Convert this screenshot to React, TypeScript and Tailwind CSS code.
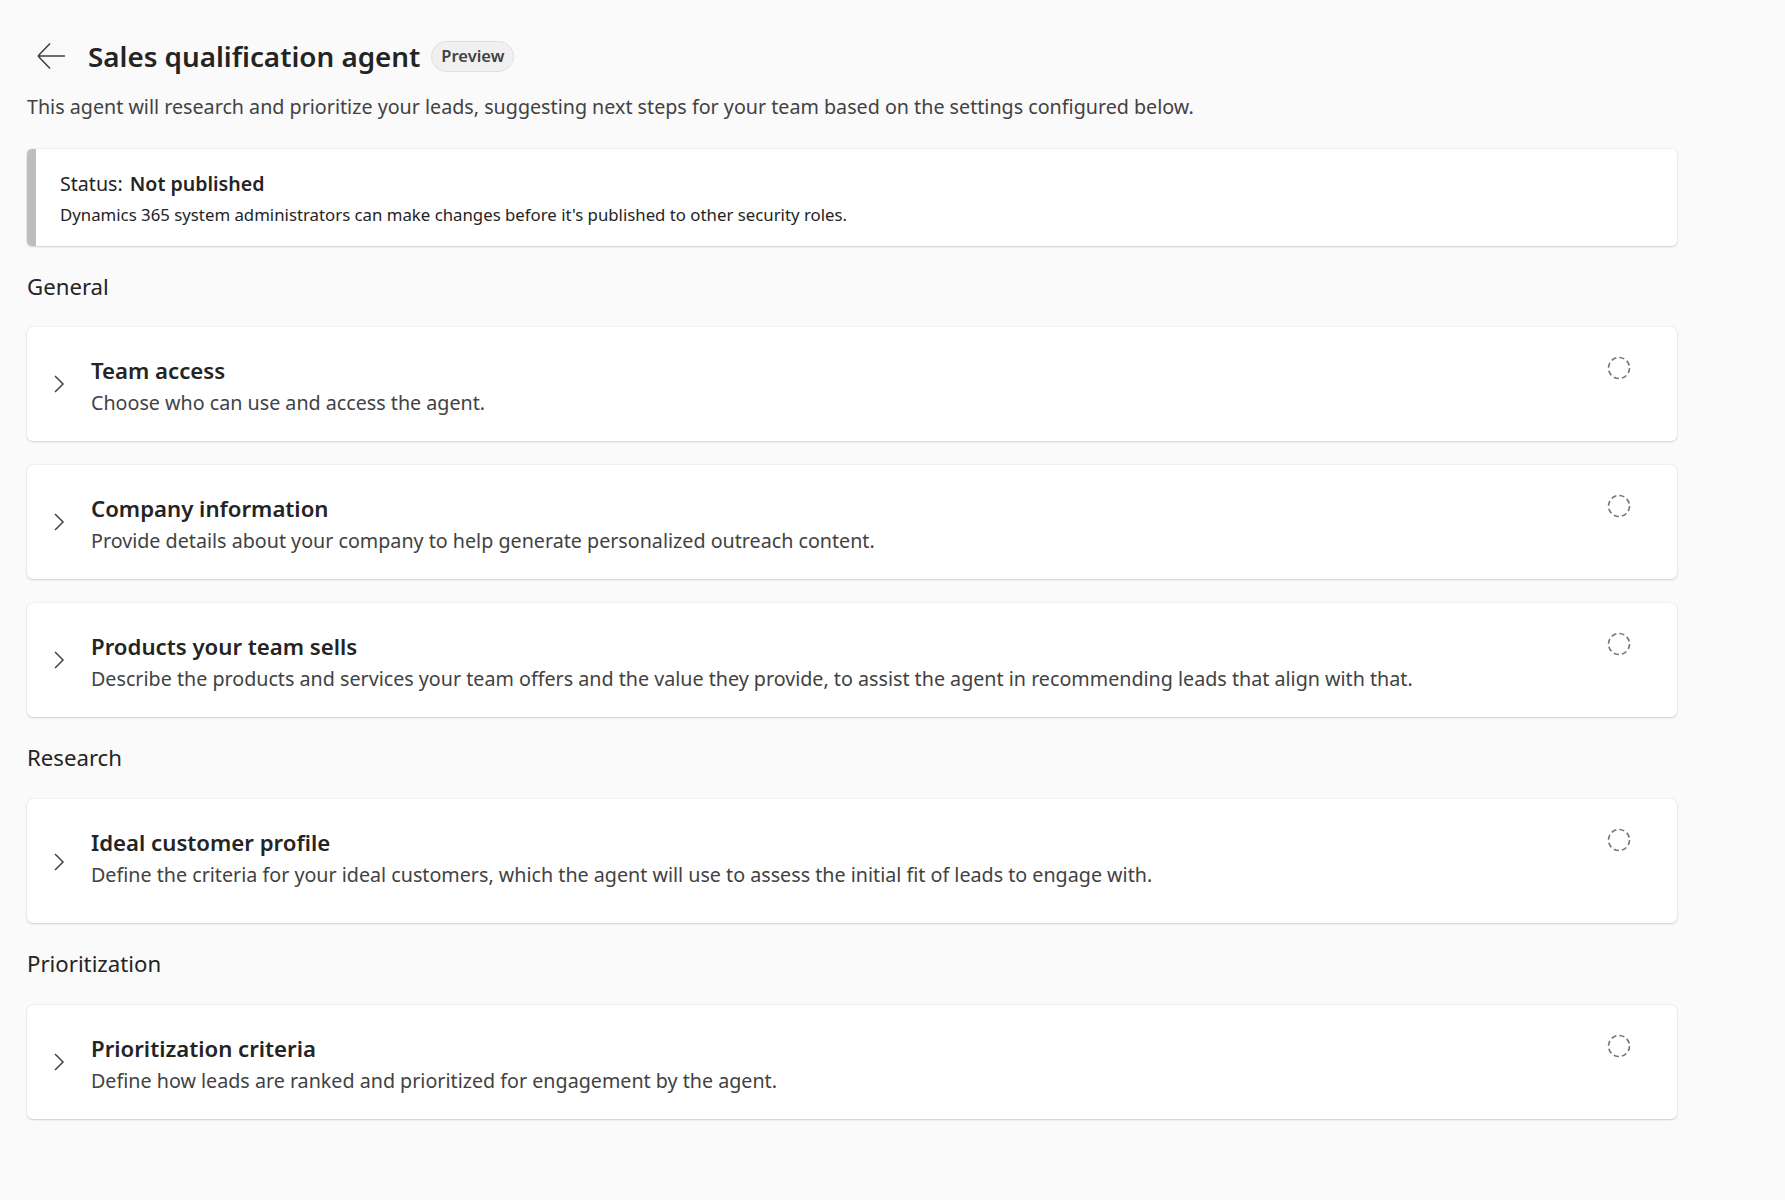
import { FC } from "react";

type Section = {
  title: string;
  description: string;
  tall?: boolean;
};

const groups: { heading: string; items: Section[] }[] = [
  {
    heading: "General",
    items: [
      { title: "Team access", description: "Choose who can use and access the agent." },
      {
        title: "Company information",
        description:
          "Provide details about your company to help generate personalized outreach content.",
      },
      {
        title: "Products your team sells",
        description:
          "Describe the products and services your team offers and the value they provide, to assist the agent in recommending leads that align with that.",
      },
    ],
  },
  {
    heading: "Research",
    items: [
      {
        title: "Ideal customer profile",
        description:
          "Define the criteria for your ideal customers, which the agent will use to assess the initial fit of leads to engage with.",
        tall: true,
      },
    ],
  },
  {
    heading: "Prioritization",
    items: [
      {
        title: "Prioritization criteria",
        description: "Define how leads are ranked and prioritized for engagement by the agent.",
      },
    ],
  },
];

const BackArrow: FC = () => (
  <svg width="32" height="32" viewBox="0 0 32 32" fill="none">
    <path d="M30 16H3M3 16L15 3.5M3 16L15 28.5" stroke="#424242" strokeWidth="1.6" />
  </svg>
);

const Chevron: FC = () => (
  <svg width="12" height="18" viewBox="0 0 12 18" fill="none">
    <path d="M2 1L10 9L2 17" stroke="#424242" strokeWidth="1.5" />
  </svg>
);

const DashedCircle: FC = () => (
  <svg width="24" height="24" viewBox="0 0 24 24" fill="none">
    <circle cx="12" cy="12" r="10.5" stroke="#757575" strokeWidth="1.6" strokeDasharray="5.2 3.05" />
  </svg>
);

const SectionCard: FC<{ item: Section }> = ({ item }) => (
  <div
    className={`flex items-start bg-white rounded-[6px] shadow-[0_0_2px_rgba(0,0,0,0.12),0_1px_2px_rgba(0,0,0,0.14)] ${
      item.tall ? "h-[124px]" : "h-[114px]"
    }`}
  >
    <div className="flex items-center h-full pl-[26px] pr-[26px]">
      <div className={item.tall ? "mt-[2px]" : "mt-[0px]"}>
        <Chevron />
      </div>
    </div>
    <div className="flex-1 pt-[28px]">
      <div className="text-[22.2px] leading-[32px] font-semibold text-[#242424]">{item.title}</div>
      <div className="text-[19.7px] leading-[32px] text-[#424242]">{item.description}</div>
    </div>
    <div className="pt-[29px] pr-[46px]">
      <DashedCircle />
    </div>
  </div>
);

export default function App() {
  return (
    <div
      className="min-h-[1200px] bg-[#fafafa] pl-[27px] pt-[39px] text-[#242424]"
      style={{ fontFamily: '"Segoe UI", "Noto Sans", sans-serif' }}
    >
      <div className="flex items-center h-[34px]">
        <div className="ml-[8px] mr-[21px] flex items-center">
          <BackArrow />
        </div>
        <h1 className="text-[27.8px] leading-[34px] font-semibold text-[#242424]">
          Sales qualification agent
        </h1>
        <span className="ml-[11px] inline-flex items-center h-[31px] px-[9px] rounded-full bg-[#f0f0f0] border border-[#e0e0e0] text-[16.5px] font-semibold text-[#424242]">
          Preview
        </span>
      </div>
      <p className="mt-[20px] text-[19.7px] leading-[28px] text-[#424242]">
        This agent will research and prioritize your leads, suggesting next steps for your team based on the settings configured below.
      </p>

      <div className="w-[1650px]">
        <div className="mt-[28px] flex h-[97px] bg-white rounded-[5px] overflow-hidden shadow-[0_0_2px_rgba(0,0,0,0.12),0_1px_2px_rgba(0,0,0,0.14)]">
          <div className="w-[9px] bg-[#bdbdbd]" />
          <div className="pl-[24px] pt-[21px]">
            <div className="text-[19.6px] leading-[28px] text-[#242424]">
              Status: <span className="ml-[2px] font-semibold">Not published</span>
            </div>
            <div className="mt-[5px] text-[16.8px] leading-[24px] text-[#242424]">
              Dynamics 365 system administrators can make changes before it's published to other security roles.
            </div>
          </div>
        </div>

        {groups.map((group, i) => (
          <div key={group.heading}>
            <div
              className={`${
                i === 0 ? "h-[81px]" : "h-[82px]"
              } flex items-center text-[22.2px] text-[#242424]`}
            >
              {group.heading}
            </div>
            <div className="flex flex-col gap-[24px]">
              {group.items.map((item) => (
                <SectionCard key={item.title} item={item} />
              ))}
            </div>
          </div>
        ))}
      </div>
    </div>
  );
}
